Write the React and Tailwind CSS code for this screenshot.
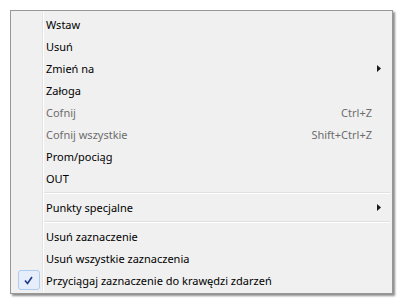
import React from "react";

const items = [
  { label: "Wstaw" },
  { label: "Usuń" },
  { label: "Zmień na", submenu: true },
  { label: "Załoga" },
  { label: "Cofnij", shortcut: "Ctrl+Z", disabled: true },
  { label: "Cofnij wszystkie", shortcut: "Shift+Ctrl+Z", disabled: true },
  { label: "Prom/pociąg" },
  { label: "OUT" },
  { separator: true },
  { label: "Punkty specjalne", submenu: true },
  { separator: true },
  { label: "Usuń zaznaczenie" },
  { label: "Usuń wszystkie zaznaczenia" },
  { label: "Przyciągaj zaznaczenie do krawędzi zdarzeń", checked: true },
];

const Gutter = ({ children }) => (
  <div className="w-[30px] shrink-0 flex items-center justify-center border-r border-r-[#e2e3e3] shadow-[1px_0_0_#ffffff] self-stretch">
    {children}
  </div>
);

const Check = () => (
  <div className="w-[22px] h-[20px] ml-[1px] -mr-[1px] rounded-[3px] border border-[#aeccf1] bg-[#e6eefb] flex items-center justify-center">
    <svg width="9" height="9" viewBox="0 0 9 9">
      <path d="M1 4.5 L3.5 7.5 L8 1" fill="none" stroke="#1c3886" strokeWidth="1.6" />
    </svg>
  </div>
);

const Arrow = () => (
  <svg width="4" height="7" viewBox="0 0 4 7" className="mr-[9px]">
    <path d="M0 0 L4 3.5 L0 7 Z" fill="#1a1a1a" />
  </svg>
);

const MenuItem = ({ item }) => {
  if (item.separator) {
    return (
      <div className="flex h-[7px]">
        <Gutter />
        <div className="flex-1 flex items-center pl-[1px]">
          <div className="w-full h-[2px] border-t border-t-[#e0e0e0] border-b border-b-white" />
        </div>
      </div>
    );
  }
  return (
    <div className="flex h-[22px] items-center">
      <Gutter>{item.checked && <Check />}</Gutter>
      <div
        className={
          "flex-1 flex items-center pl-[3px] " +
          (item.disabled ? "text-[#6d6d6d]" : "text-black")
        }
      >
        <span className="flex-1">{item.label}</span>
        {item.shortcut && <span className="mr-[18px]">{item.shortcut}</span>}
        {item.submenu && <Arrow />}
      </div>
    </div>
  );
};

export default function App() {
  return (
    <div
      className="w-[403px] h-[306px] bg-white pt-[10px] pl-[10px] text-[11px] leading-none"
      style={{ fontFamily: '"Noto Sans", "Open Sans", sans-serif' }}
    >
      <div className="w-[383px] border border-[#979797] bg-[#f0f0f0] p-[2px] shadow-[2px_2px_2px_rgba(0,0,0,0.45)]">
        {items.map((item, i) => (
          <MenuItem key={i} item={item} />
        ))}
      </div>
    </div>
  );
}
